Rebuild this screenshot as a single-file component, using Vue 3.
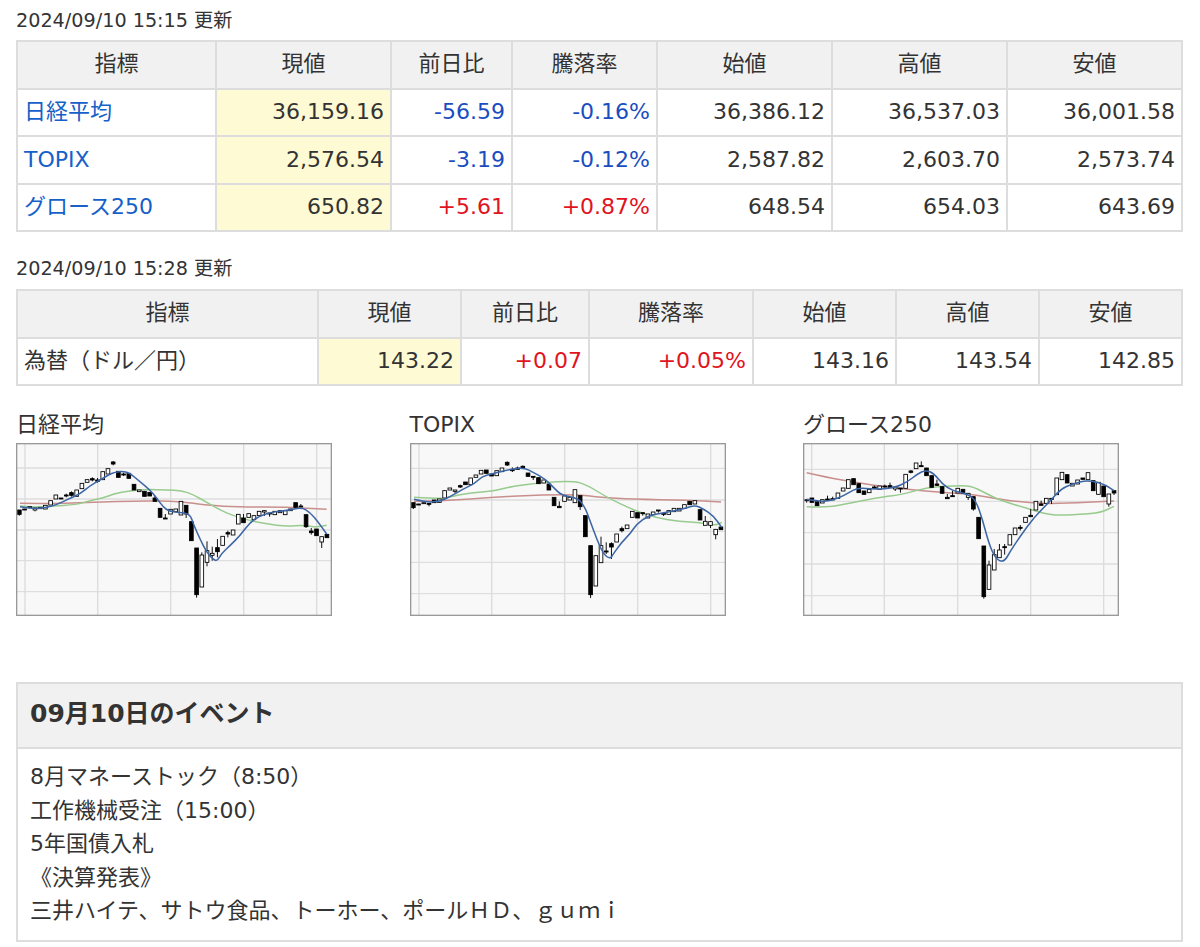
<script setup>
const W = 0, B = 1
// body rows: [type, bodyTop, bodyBottom, wickTop?, wickBottom?] in 3x chart coordinates
const charts = [
  {
    title: '日経平均', vx: 48, x0: 58, step: 15.64,
    h: [172, 265, 358, 450, 543], v: [75, 293, 512, 731, 950],
    blue: [[60,288],[100,294],[135,291],[170,282],[205,265],[240,250],[270,225],[300,208],[325,193],[345,184],[370,182],[390,188],[420,213],[450,238],[470,262],[490,290],[510,303],[540,305],[570,310],[580,340],[600,385],[620,425],[640,447],[652,451],[665,428],[690,405],[720,375],[750,335],[780,315],[820,303],[860,300],[905,290],[930,305],[955,335],[980,370]],
    green: [[60,286],[100,290],[150,287],[230,282],[270,270],[310,262],[340,250],[390,240],[440,236],[500,238],[545,240],[580,252],[620,275],[660,298],[700,315],[750,330],[800,340],[860,347],[910,343],[950,350],[980,344]],
    red: [[60,278],[150,279],[280,275],[420,270],[540,272],[620,284],[720,289],[860,289],[980,296]],
    c: [[B,298,311,298,315],[B,295,298],[W,288,291],[W,292,298,292,302],[W,290,294],[W,284,295],[W,270,283],[W,253,265],[B,262,265],[B,253,256,249,260],[B,246,254,242,258],[W,238,257],[W,218,234],[W,207,215],[B,204,208,200,212],[B,208,212,202,216],[W,183,207],[W,174,190],[B,154,160,151,164],[B,182,200],[B,190,193,186,196],[B,188,203],[B,221,238],[W,238,243],[B,242,257],[B,245,256],[B,262,272,255,272],[B,293,320],[B,322,325,310,325],[W,296,310],[W,295,303],[W,272,313],[B,284,310,284,322],[B,333,390],[B,412,552,412,561],[W,433,529,425,529],[W,420,455,392,467],[W,428,434,408,450],[B,411,423,385,440],[W,377,404],[B,366,370,360,380],[W,358,373],[W,311,340],[B,322,336,310,336],[W,309,320],[W,315,327],[W,302,315],[W,300,304,298,316],[B,307,310,307,318],[W,302,312],[W,300,306],[W,300,312],[W,295,300],[B,276,290],[B,286,289,280,289],[B,312,348,312,352],[B,361,366,352,372],[B,355,375],[W,378,394,378,412],[B,371,381]]
  },
  {
    title: 'TOPIX', vx: 30, x0: 40, step: 15.64,
    h: [173, 268, 362, 455, 549], v: [57, 275, 494, 713, 932],
    blue: [[42,266],[80,275],[120,272],[150,258],[190,235],[225,218],[245,198],[275,190],[320,178],[370,170],[400,185],[435,205],[460,230],[485,254],[535,263],[555,290],[570,330],[590,385],[610,430],[630,445],[640,430],[665,395],[690,370],[710,340],[745,315],[790,307],[850,295],[885,283],[910,295],[940,315],[965,350]],
    green: [[42,260],[100,263],[130,263],[190,250],[285,240],[330,228],[420,216],[520,211],[560,222],[620,260],[700,298],[770,322],[840,333],[900,335],[945,345],[965,335]],
    red: [[42,272],[140,270],[280,260],[430,252],[540,252],[600,260],[700,266],[860,268],[963,274]],
    c: [[B,276,291,276,295],[B,280,282],[W,276,279],[B,278,281,278,287],[B,268,276],[W,265,275],[W,240,262],[W,232,238],[W,238,242,238,247],[B,225,229,222,232],[B,214,222],[W,202,222],[W,193,200],[W,179,190],[B,178,188],[B,190,196],[W,180,195],[W,172,183],[B,155,163,152,166],[B,176,180,170,184],[B,172,176,168,176],[B,167,172,164,175],[B,187,197],[B,197,200,197,208],[B,201,219],[W,208,217],[B,220,238],[B,260,285],[B,287,291,272,291],[W,256,272],[W,260,268],[W,237,276],[B,255,288,255,298],[B,315,378],[B,405,552,405,562],[W,435,526],[W,405,456,378,456],[B,421,423,395,430],[B,399,409,395,445],[W,370,394],[B,354,360,348,365],[W,343,354],[W,302,320],[B,306,322],[B,306,309,306,315],[W,310,322],[W,304,312],[B,298,301,298,306],[B,308,311,308,316],[W,300,311],[W,293,303],[W,293,301],[W,282,293],[B,272,282],[W,270,280],[B,297,328],[W,332,344,316,344],[W,333,344,333,352],[W,356,372,356,386],[B,349,357]]
  },
  {
    title: 'グロース250', vx: 27, x0: 38, step: 15.63,
    h: [176, 272, 366, 460, 555], v: [53, 271, 491, 710, 929],
    blue: [[38,266],[70,272],[110,271],[150,255],[190,231],[240,236],[300,232],[340,214],[370,190],[395,178],[420,188],[445,220],[475,240],[520,250],[545,268],[565,325],[585,400],[605,445],[630,455],[650,420],[680,375],[720,320],[770,270],[800,235],[835,220],[880,208],[930,220],[960,240]],
    green: [[38,288],[100,291],[170,277],[270,258],[320,253],[400,230],[480,225],[530,225],[570,245],[620,270],[700,293],[770,315],[860,311],[920,306],[960,287]],
    red: [[38,186],[100,200],[180,215],[300,232],[440,245],[530,250],[600,263],[700,277],[800,279],[960,271]],
    c: [[W,267,270,267,276],[B,262,275],[B,273,285],[W,267,277],[B,265,269,255,269],[B,264,268,258,268],[W,247,263],[W,232,241],[W,207,233],[B,204,222],[B,219,246],[B,241,251],[W,236,246],[B,229,233,225,233],[W,226,236],[B,226,228,222,231],[B,225,230,216,230],[W,229,235,229,241],[B,232,234,232,246],[W,191,233],[B,181,185,178,188],[W,157,174],[B,165,168,152,168],[B,172,195],[B,195,230],[B,220,224,207,226],[B,228,248],[B,260,264,250,264],[B,255,258,240,258],[W,233,247],[B,236,248],[W,248,260,248,268],[B,258,295,258,300],[B,320,384],[B,406,558,406,564],[W,463,536,450,536],[W,432,478,415,478],[W,418,441,400,441],[B,408,411,400,432],[W,372,403],[W,352,372],[B,350,353,343,360],[W,320,335],[B,314,318,295,318],[W,272,298],[B,280,284,270,284],[W,263,278],[B,263,266,263,280],[W,202,252],[W,185,207],[B,192,217],[W,218,226],[W,208,220],[B,202,206],[W,186,207],[B,210,240],[W,215,251],[B,226,258],[W,250,280,250,288],[B,240,247,240,253]]
  }
]

function smooth(p) {
  let d = `M${p[0][0]} ${p[0][1]}`
  for (let i = 1; i < p.length - 1; i++) {
    const mx = (p[i][0] + p[i + 1][0]) / 2
    const my = (p[i][1] + p[i + 1][1]) / 2
    d += ` Q${p[i][0]} ${p[i][1]} ${mx} ${my}`
  }
  const l = p[p.length - 1]
  return d + ` L${l[0]} ${l[1]}`
}

const indices = [
  { name: '日経平均', now: '36,159.16', diff: '-56.59', rate: '-0.16%', open: '36,386.12', high: '36,537.03', low: '36,001.58', cls: 'down' },
  { name: 'TOPIX', now: '2,576.54', diff: '-3.19', rate: '-0.12%', open: '2,587.82', high: '2,603.70', low: '2,573.74', cls: 'down' },
  { name: 'グロース250', now: '650.82', diff: '+5.61', rate: '+0.87%', open: '648.54', high: '654.03', low: '643.69', cls: 'up' }
]
const events = ['8月マネーストック（8:50）', '工作機械受注（15:00）', '5年国債入札', '《決算発表》', '三井ハイテ、サトウ食品、トーホー、ポールＨＤ、ｇｕｍｉ']
</script>

<template>
  <div class="page">
    <p class="stamp first">2024/09/10 15:15 更新</p>
    <table class="quotes">
      <colgroup>
        <col class="c200" /><col class="c175" /><col class="c121" /><col class="c145" /><col class="c175" /><col class="c175" /><col />
      </colgroup>
      <thead>
        <tr><th>指標</th><th>現値</th><th>前日比</th><th>騰落率</th><th>始値</th><th>高値</th><th>安値</th></tr>
      </thead>
      <tbody>
        <tr v-for="r in indices" :key="r.name">
          <td class="name"><a href="#">{{ r.name }}</a></td>
          <td class="num now">{{ r.now }}</td>
          <td class="num" :class="r.cls">{{ r.diff }}</td>
          <td class="num" :class="r.cls">{{ r.rate }}</td>
          <td class="num">{{ r.open }}</td>
          <td class="num">{{ r.high }}</td>
          <td class="num">{{ r.low }}</td>
        </tr>
      </tbody>
    </table>

    <p class="stamp second">2024/09/10 15:28 更新</p>
    <table class="quotes">
      <colgroup>
        <col class="c301" /><col class="c143" /><col class="c128" /><col class="c164" /><col class="c143" /><col class="c143" /><col />
      </colgroup>
      <thead>
        <tr><th>指標</th><th>現値</th><th>前日比</th><th>騰落率</th><th>始値</th><th>高値</th><th>安値</th></tr>
      </thead>
      <tbody>
        <tr>
          <td class="name plain">為替（ドル／円）</td>
          <td class="num now">143.22</td>
          <td class="num up">+0.07</td>
          <td class="num up">+0.05%</td>
          <td class="num">143.16</td>
          <td class="num">143.54</td>
          <td class="num">142.85</td>
        </tr>
      </tbody>
    </table>

    <div class="charts">
      <figure v-for="ch in charts" :key="ch.title" class="chart">
        <figcaption>{{ ch.title }}</figcaption>
        <svg class="plot" width="316" height="173" :viewBox="`${ch.vx} 97 948 519`">
          <rect :x="ch.vx" y="97" width="948" height="519" fill="#f8f8f8" />
          <path v-for="y in ch.h" :key="'h' + y" :d="`M${ch.vx} ${y}H${ch.vx + 948}`" stroke="#dedede" stroke-width="4" />
          <path v-for="x in ch.v" :key="'v' + x" :d="`M${x} 97V616`" stroke="#dcdcdc" stroke-width="4" />
          <path :d="smooth(ch.red)" fill="none" stroke="#c98f8c" stroke-width="4.4" />
          <path :d="smooth(ch.green)" fill="none" stroke="#98cb8e" stroke-width="4.4" />
          <g v-for="(k, i) in ch.c" :key="i">
            <path :d="`M${ch.x0 + ch.step * i} ${k[3] ?? k[1]}V${k[4] ?? k[2]}`" stroke="#111" stroke-width="3" />
            <rect :x="ch.x0 + ch.step * i - 5.5" :y="k[1]" width="11" :height="Math.max(k[2] - k[1], 3)" :fill="k[0] ? '#000' : '#fff'" stroke="#000" stroke-width="2.6" />
          </g>
          <path :d="smooth(ch.blue)" fill="none" stroke="#3d66a6" stroke-width="4.6" />
          <rect :x="ch.vx + 2" y="99" width="944" height="515" fill="none" stroke="#999" stroke-width="4" />
        </svg>
      </figure>
    </div>

    <section class="events">
      <h2>09月10日のイベント</h2>
      <ul>
        <li v-for="e in events" :key="e">{{ e }}</li>
      </ul>
    </section>
  </div>
</template>

<style scoped>
.page {
  box-sizing: border-box;
  width: 1200px;
  padding: 0 17px 0 16px;
  color: #333;
  font-family: "DejaVu Sans", "Noto Sans CJK JP", sans-serif;
}
.c200 { width: 199px; }
.c175 { width: 175px; }
.c121 { width: 121px; }
.c145 { width: 145px; }
.c301 { width: 301px; }
.c143 { width: 143px; }
.c128 { width: 128px; }
.c164 { width: 164px; }
.stamp {
  margin: 0;
  font-size: 19.2px;
  line-height: 24px;
  box-sizing: border-box;
}
.stamp.first { padding-top: 9px; height: 40px; }
.stamp.second { padding-top: 25px; height: 57px; }
.quotes {
  width: 100%;
  table-layout: fixed;
  border-collapse: collapse;
  border: 2px solid #ddd;
  font-size: 22px;
}
.quotes th,
.quotes td {
  height: 47.5px;
  padding: 0 6px;
  border: 2px solid #ddd;
  box-sizing: border-box;
  line-height: 30px;
  white-space: nowrap;
}
.quotes th {
  padding-bottom: 2px;
  background: #f1f1f1;
  font-weight: normal;
  text-align: center;
}
.name a {
  color: #1560c9;
  text-decoration: none;
}
.num { text-align: right; }
.now { background: #fefad3; }
.down { color: #1a4dbf; }
.up { color: #e0141e; }
.charts {
  display: flex;
  gap: 77.5px;
  margin-top: 23px;
}
.chart { margin: 0; width: 316px; }
.chart figcaption {
  font-size: 22px;
  line-height: 28px;
  height: 34px;
  padding-top: 2px;
  box-sizing: border-box;
}
.plot { display: block; filter: blur(0.35px); }
.events {
  margin-top: 66px;
  border: 2px solid #ddd;
}
.events h2 {
  margin: 0;
  padding: 0 12px;
  height: 63px;
  line-height: 60px;
  font-size: 25px;
  font-weight: bold;
  background: #f1f1f1;
  border-bottom: 2px solid #ddd;
}
.events ul {
  list-style: none;
  margin: 0;
  padding: 11px 12px 12px;
  font-size: 22px;
  line-height: 33.5px;
}
</style>
<style>
html, body { background: #fff; }
</style>
